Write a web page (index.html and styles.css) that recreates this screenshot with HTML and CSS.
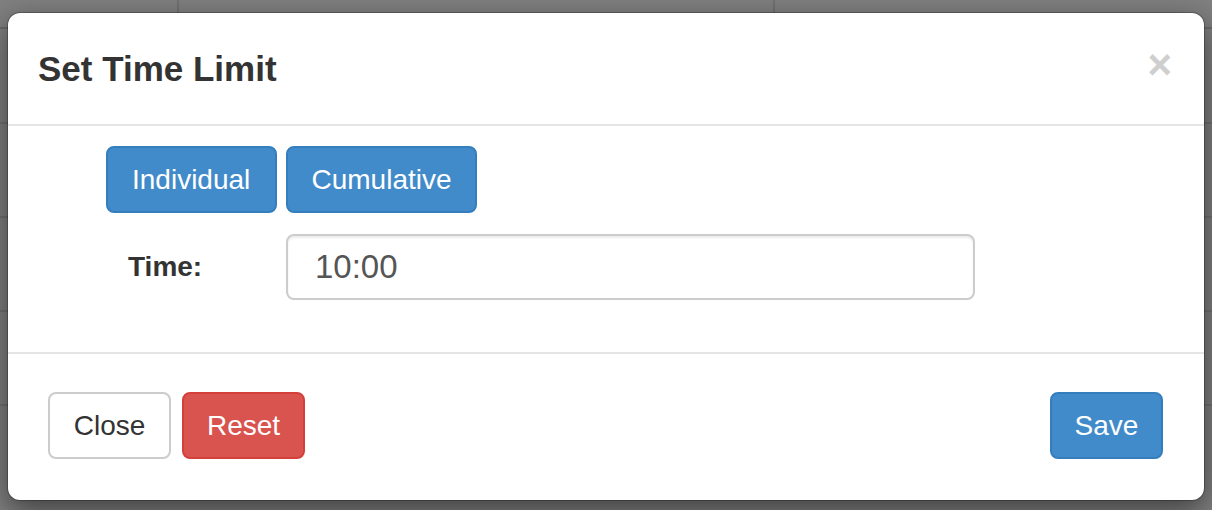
FILE: index.html
```html
<!DOCTYPE html>
<html>
<head>
<meta charset="utf-8">
<link rel="stylesheet" href="styles.css">
</head>
<body>
<div class="backdrop-table">
  <div class="bt-row head"><div class="bt-cell c1"></div><div class="bt-cell c2"></div><div class="bt-cell c3"></div></div>
  <div class="bt-row"><div class="bt-cell c1"></div><div class="bt-cell c2"></div><div class="bt-cell c3"></div></div>
  <div class="bt-row"><div class="bt-cell c1"></div><div class="bt-cell c2"></div><div class="bt-cell c3"></div></div>
  <div class="bt-row"><div class="bt-cell c1"></div><div class="bt-cell c2"></div><div class="bt-cell c3"></div></div>
</div>

<div class="modal">
  <div class="modal-header">
    <h4 class="modal-title">Set Time Limit</h4>
    <button class="close" type="button">&times;</button>
  </div>
  <div class="modal-body">
    <div class="mode-row">
      <button class="btn btn-primary btn-mode-a" type="button">Individual</button>
      <button class="btn btn-primary btn-mode-b" type="button">Cumulative</button>
    </div>
    <div class="time-row">
      <label class="time-label">Time:</label>
      <input class="form-control" type="text" value="10:00">
    </div>
  </div>
  <div class="modal-footer">
    <div class="footer-left">
      <button class="btn btn-default btn-foot" type="button">Close</button>
      <button class="btn btn-danger btn-foot" type="button">Reset</button>
    </div>
    <button class="btn btn-primary btn-save" type="button">Save</button>
  </div>
</div>
</body>
</html>
```

FILE: styles.css
```css
html, body {
  margin: 0;
  padding: 0;
}
body {
  width: 1212px;
  height: 510px;
  background: #808080;
  font-family: "Liberation Sans", Arial, sans-serif;
  overflow: hidden;
  position: relative;
}

/* dimmed page behind the modal */
.backdrop-table {
  display: flex;
  flex-direction: column;
}
.bt-row {
  display: grid;
  grid-template-columns: 179px 596px 1fr;
  height: 94px;
  border-bottom: 2px solid #727272;
  box-sizing: border-box;
}
.bt-row.head {
  height: 124px;
}
.bt-row.head .bt-cell {
  border-bottom: 2px solid #6c6c6c;
  height: 27px;
}
.bt-cell.c1, .bt-cell.c2 {
  border-right: 2px solid #727272;
}

/* modal */
.modal {
  position: absolute;
  left: 7px;
  top: 12px;
  width: 1198px;
  height: 489px;
  box-sizing: border-box;
  background: #fff;
  border: 1px solid rgba(0, 0, 0, 0.25);
  border-radius: 13px;
  background-clip: padding-box;
  box-shadow: 0 10px 30px rgba(0, 0, 0, 0.5);
  display: flex;
  flex-direction: column;
}

.modal-header {
  display: flex;
  justify-content: space-between;
  align-items: center;
  padding: 30px 32px 30px 30px;
  border-bottom: 2px solid #e5e5e5;
}
.modal-title {
  margin: 0;
  font-size: 35px;
  font-weight: bold;
  line-height: 51px;
  color: #333;
}
.close {
  background: none;
  border: 0;
  padding: 0;
  margin-top: -8px;
  font-family: "Liberation Sans", Arial, sans-serif;
  font-size: 42px;
  font-weight: bold;
  line-height: 1;
  color: #cfcfcf;
}

.modal-body {
  padding: 20px 32px 52px 32px;
  display: flex;
  flex-direction: column;
  gap: 21px;
}
.mode-row {
  display: flex;
  gap: 9px;
  padding-left: 66px;
}
.time-row {
  display: grid;
  grid-template-columns: 246px 689px;
  align-items: center;
}
.time-label {
  padding-left: 88px;
  font-size: 28px;
  font-weight: bold;
  color: #333;
}
.form-control {
  box-sizing: border-box;
  width: 689px;
  height: 66px;
  border: 2px solid #ccc;
  border-radius: 8px;
  padding: 0 27px;
  font-family: "Liberation Sans", Arial, sans-serif;
  font-size: 33px;
  color: #555;
  box-shadow: inset 0 2px 2px rgba(0, 0, 0, 0.075);
  outline: none;
}

.btn {
  box-sizing: border-box;
  height: 67px;
  padding: 0 24px;
  border: 2px solid transparent;
  border-radius: 8px;
  font-family: "Liberation Sans", Arial, sans-serif;
  font-size: 28px;
  line-height: 41px;
  cursor: pointer;
}
.btn-primary {
  background: #428bca;
  border-color: #357ebd;
  color: #fff;
}
.btn-default {
  background: #fff;
  border-color: #ccc;
  color: #333;
}
.btn-danger {
  background: #d9534f;
  border-color: #d43f3a;
  color: #fff;
}
.btn-mode-a {
  padding: 0 25px 0 24px;
  width: 171px;
}
.btn-mode-b {
  width: 191px;
  padding: 0;
}
.btn-foot {
  width: 123px;
  padding: 0;
}
.btn-save {
  width: 113px;
  padding: 0;
}

.modal-footer {
  display: flex;
  justify-content: space-between;
  align-items: flex-start;
  padding: 38px 41px 0 40px;
  border-top: 2px solid #e5e5e5;
  flex: 1;
}
.footer-left {
  display: flex;
  gap: 11px;
}
```
